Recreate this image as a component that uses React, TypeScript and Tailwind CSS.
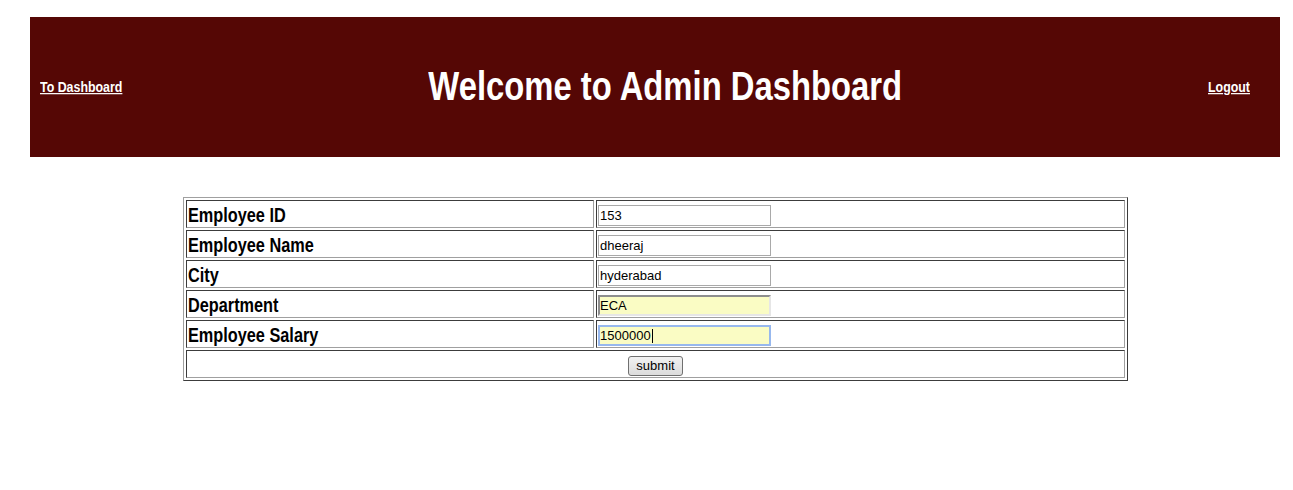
const rows = [
  { label: "Employee ID", value: "153", kind: "plain" },
  { label: "Employee Name", value: "dheeraj", kind: "plain" },
  { label: "City", value: "hyderabad", kind: "plain" },
  { label: "Department", value: "ECA", kind: "filled" },
  { label: "Employee Salary", value: "1500000", kind: "focused" },
];

const cell =
  "border border-t-[#3c3c3c] border-l-[#3c3c3c] border-r-[#a0a0a0] border-b-[#a0a0a0] p-px h-[28px] align-middle";

function Field({ value, kind }: { value: string; kind: string }) {
  const base =
    "block w-[173px] h-[21px] text-[13px] text-black outline-none font-['Liberation_Sans',Arial,sans-serif]";
  const look =
    kind === "plain"
      ? "bg-white border border-[#a9a9a9] px-px"
      : kind === "filled"
      ? "bg-[#fafcc4] border-2 border-t-[#8e8e8e] border-l-[#8e8e8e] border-r-[#e6e6e6] border-b-[#e6e6e6] px-0"
      : "bg-[#fafcc4] border-2 border-[#97b8ee] px-0";

  return (
    <div className="relative w-fit mt-[2px]">
      <input readOnly defaultValue={value} className={`${base} ${look}`} />
      {kind === "focused" && (
        <span className="absolute left-[54px] top-[4px] h-[14px] w-px bg-black" />
      )}
    </div>
  );
}

export default function App() {
  return (
    <div className="min-h-[490px] bg-white pt-[17px] font-['Liberation_Sans',Arial,sans-serif]">
      {/* Header */}
      <header className="ml-[30px] w-[1250px] h-[140px] bg-[#550705] flex items-center justify-between pl-[10px] pr-[30px] text-white">
        <a href="#" className="inline-block text-[12.4px] font-bold underline scale-y-[1.22]">
          To Dashboard
        </a>
        <h1 className="text-[32.8px] font-bold leading-none scale-y-[1.22]">
          Welcome to Admin Dashboard
        </h1>
        <a href="#" className="inline-block text-[12.4px] font-bold underline scale-y-[1.22]">
          Logout
        </a>
      </header>

      {/* Form */}
      <div className="mt-[40px] ml-[183px]">
        <table className="w-[945px] border-separate border-spacing-[2px] border border-t-[#a0a0a0] border-l-[#a0a0a0] border-r-[#3c3c3c] border-b-[#3c3c3c]">
          <tbody>
            {rows.map((r) => (
              <tr key={r.label}>
                <td className={`${cell} w-[408px]`}>
                  <span className="inline-block text-[16.3px] font-bold text-black leading-none scale-y-[1.22] translate-y-[2px]">
                    {r.label}
                  </span>
                </td>
                <td className={cell}>
                  <Field value={r.value} kind={r.kind} />
                </td>
              </tr>
            ))}
            <tr>
              <td colSpan={2} className={`${cell} text-center`}>
                <button className="h-[20px] px-[7px] text-[13px] leading-none text-black rounded-[3px] border border-[#707070] bg-gradient-to-b from-[#f2f2f2] to-[#dcdcdc] translate-y-[1px]">
                  submit
                </button>
              </td>
            </tr>
          </tbody>
        </table>
      </div>
    </div>
  );
}
